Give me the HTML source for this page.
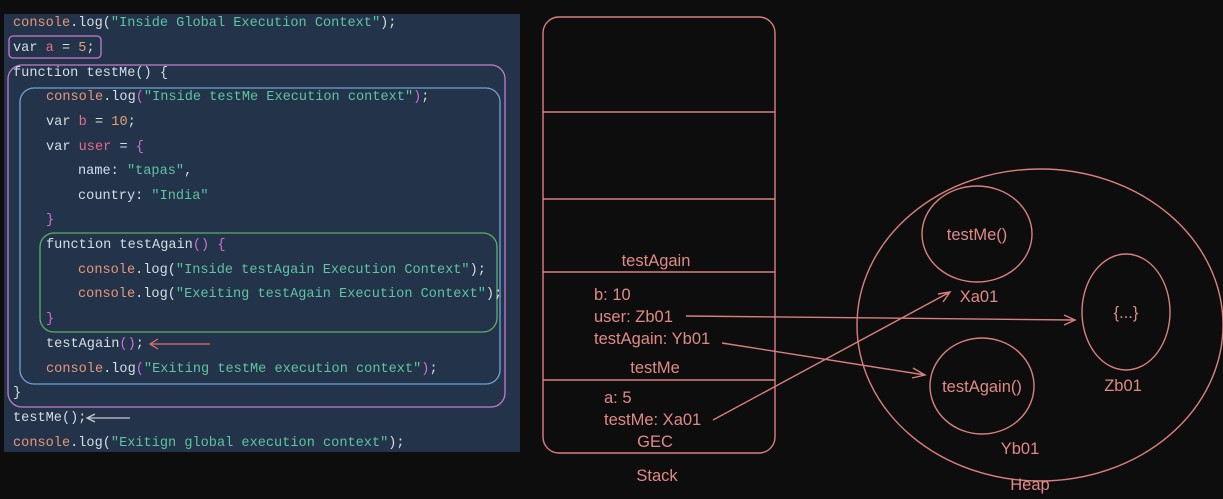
<!DOCTYPE html>
<html><head><style>
body{margin:0;width:1223px;height:499px;background:#0d0d0d;overflow:hidden;position:relative;font-family:"Liberation Sans",sans-serif}
#code{position:absolute;left:4px;top:14px;width:516px;height:438px;background:#22334a}
.l{position:absolute;font-family:"Liberation Mono",monospace;font-size:13.6px;white-space:pre;color:#d6dde6;line-height:16px;margin-top:2px}
.o{color:#e8967a}.s{color:#5fc4a0}.p{color:#d070d8}.v{color:#e66a8a}.n{color:#e8a070}
svg{position:absolute;left:0;top:0}
</style></head><body>
<div id="code"></div>
<svg width="1223" height="499">
<g fill="none" stroke-width="1.3">
<rect x="9" y="36" width="92" height="22" rx="4" stroke="#c77ad0"/>
<rect x="8" y="65" width="497" height="342" rx="14" stroke="#c77ad0"/>
<rect x="20" y="88" width="480" height="296" rx="14" stroke="#6fa3d8"/>
<rect x="40" y="233" width="457" height="99" rx="14" stroke="#5fae6a"/>
<path d="M210 344 L150 344 M158 339 L150 344 L158 349" stroke="#e07070"/>
<path d="M130 418 L87 418 M95 414 L87 418 L95 422" stroke="#c8c8d0"/>
</g>
</svg>
<div class="l" style="left:13px;top:14px"><span class="o">console</span>.log(<span class="s">"Inside Global Execution Context"</span>);</div>
<div class="l" style="left:13px;top:39px">var <span class="v">a</span> = <span class="n">5</span>;</div>
<div class="l" style="left:13px;top:64px">function testMe() {</div>
<div class="l" style="left:46px;top:88px"><span class="o">console</span>.log<span class="p">(</span><span class="s">"Inside testMe Execution context"</span><span class="p">)</span>;</div>
<div class="l" style="left:46px;top:113px">var <span class="v">b</span> = <span class="n">10</span>;</div>
<div class="l" style="left:46px;top:138px">var <span class="v">user</span> = <span class="p">{</span></div>
<div class="l" style="left:78px;top:162px">name: <span class="s">"tapas"</span>,</div>
<div class="l" style="left:78px;top:187px">country: <span class="s">"India"</span></div>
<div class="l" style="left:46px;top:211px"><span class="p">}</span></div>
<div class="l" style="left:46px;top:236px">function testAgain<span class="p">()</span> <span class="p">{</span></div>
<div class="l" style="left:78px;top:261px"><span class="o">console</span>.log(<span class="s">"Inside testAgain Execution Context"</span>);</div>
<div class="l" style="left:78px;top:285px"><span class="o">console</span>.log(<span class="s">"Exeiting testAgain Execution Context"</span>);</div>
<div class="l" style="left:46px;top:310px"><span class="p">}</span></div>
<div class="l" style="left:46px;top:335px">testAgain<span class="p">()</span>;</div>
<div class="l" style="left:46px;top:360px"><span class="o">console</span>.log<span class="p">(</span><span class="s">"Exiting testMe execution context"</span><span class="p">)</span>;</div>
<div class="l" style="left:13px;top:384px">}</div>
<div class="l" style="left:13px;top:409px">testMe();</div>
<div class="l" style="left:13px;top:434px"><span class="o">console</span>.log(<span class="s">"Exitign global execution context"</span>);</div>
<svg width="1223" height="499" style="font-family:'Liberation Sans',sans-serif;font-size:16.5px">
<g fill="none" stroke="#d9807e" stroke-width="1.4">
<rect x="543" y="17" width="232" height="436" rx="16"/>
<path d="M543 112H775M543 199H775M543 272H775M543 380H775"/>
<ellipse cx="1040" cy="325" rx="183" ry="156"/>
<ellipse cx="977" cy="234" rx="55" ry="48"/>
<ellipse cx="1126" cy="312" rx="44" ry="58"/>
<ellipse cx="982" cy="386" rx="52" ry="48"/>
<path d="M713 420L950 292M938 294L950 292L943 302"/>
<path d="M686 316L1075 320M1064 315L1075 320L1064 325"/>
<path d="M722 343L925 375M913 368L925 375L912 378"/>
</g>
<g fill="#e08a88">
<text x="656" y="266" text-anchor="middle">testAgain</text>
<text x="594" y="300">b: 10</text>
<text x="594" y="322">user: Zb01</text>
<text x="594" y="344">testAgain: Yb01</text>
<text x="655" y="373" text-anchor="middle">testMe</text>
<text x="604" y="403">a: 5</text>
<text x="604" y="425">testMe: Xa01</text>
<text x="655" y="447" text-anchor="middle">GEC</text>
<text x="657" y="481" text-anchor="middle">Stack</text>
<text x="977" y="240" text-anchor="middle">testMe()</text>
<text x="979" y="302" text-anchor="middle">Xa01</text>
<text x="1126" y="318" text-anchor="middle">{...}</text>
<text x="1123" y="391" text-anchor="middle">Zb01</text>
<text x="982" y="392" text-anchor="middle">testAgain()</text>
<text x="1020" y="454" text-anchor="middle">Yb01</text>
<text x="1030" y="490" text-anchor="middle">Heap</text>
</g>
</svg>
</body></html>
